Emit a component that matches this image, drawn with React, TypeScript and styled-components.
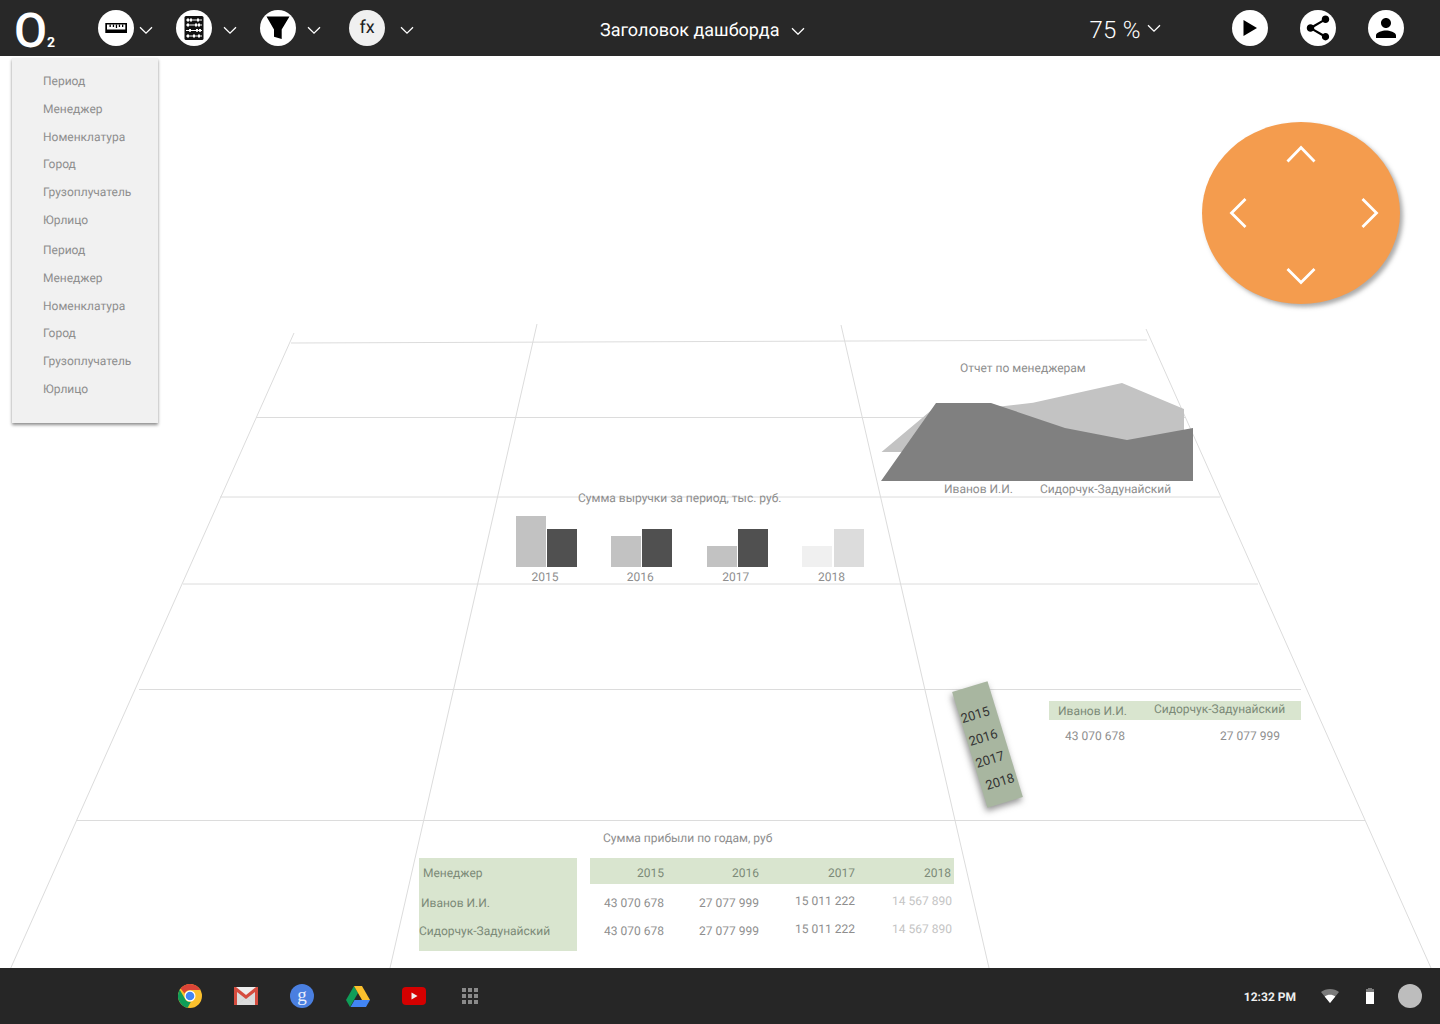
import { FC } from "react";
import styled, { createGlobalStyle } from "styled-components";

const filters = ["Период", "Менеджер", "Номенклатура", "Город", "Грузоплучатель", "Юрлицо"];

const bars = [
  { year: "2015", left: 51, right: 38, leftColor: "#c2c2c2", rightColor: "#505050" },
  { year: "2016", left: 31, right: 38, leftColor: "#c2c2c2", rightColor: "#505050" },
  { year: "2017", left: 21, right: 38, leftColor: "#c2c2c2", rightColor: "#505050" },
  { year: "2018", left: 21, right: 38, leftColor: "#f0f0f0", rightColor: "#dcdcdc" },
];

const years = ["2015", "2016", "2017", "2018"];
const chipShift = [-2, -1, -1, 2];
const amounts = ["43 070 678", "27 077 999", "15 011 222", "14 567 890"];

const Chevron: FC = () => (
  <ChevronMark width="14" height="8.4" viewBox="0 0 14 8.4" fill="none">
    <path d="M1 1.2 7 7.2 13 1.2" stroke="#fff" strokeWidth="1.3" />
  </ChevronMark>
);

const RulerIcon = () => (
  <svg width="24" height="24" viewBox="0 0 24 24">
    <path fill="#000" d="M1.300 7h21.700v10H1.300z" />
    <path fill="#fff" d="M3 8.500h18.300v5H3z" />
    <path fill="#000" d="M5.500 8.500h1.300v2.600H5.500zM8.800 8.500h1.300v2.600H8.800zM11.800 8.500h1.300v3.400h-1.300zM14.800 8.500h1.300v2.600h-1.300zM18 8.500h1.300v2.600H18z" />
  </svg>
);

const AbacusIcon = () => (
  <svg width="26" height="26" viewBox="0 0 26 26">
    <rect x="3.500" y="1" width="19" height="24" rx="1.500" fill="#111" />
    <path stroke="#fff" strokeWidth="1" d="M5 5h16M5 10h16M5 15.500h16M5 21h16" />
    <path fill="#fff" d="M6 3.600h2v2.800H6zM9 3.600h2v2.800H9zM16 3.600h2v2.800h-2zM6 8.600h2v2.800H6zM14 8.600h2v2.800h-2zM17 8.600h2v2.800h-2zM8 14h2v2.800H8zM15 14h2v2.800h-2zM18 14h2v2.800h-2zM6 19.600h2v2.800H6zM12 19.600h2v2.800h-2zM17 19.600h2v2.800h-2z" />
  </svg>
);

const FunnelIcon = () => (
  <svg width="30" height="30" viewBox="0 0 30 30">
    <path fill="#000" d="M3.500 3.500H26.500L18.700 16.500V26L11 23.700V16.500z" />
  </svg>
);

const PlayIcon = () => (
  <svg width="20" height="20" viewBox="0 0 20 20">
    <path fill="#000" d="M3.500 2 17 10 3.500 18z" />
  </svg>
);

const ShareIcon = () => (
  <svg width="30" height="30" viewBox="0 0 24 24">
    <path
      fill="#000"
      d="M18 16.080c-.76 0-1.440.3-1.960.77L8.910 12.700c.05-.23.09-.46.09-.7s-.04-.47-.09-.7l7.050-4.110c.54.5 1.250.81 2.040.81 1.660 0 3-1.340 3-3s-1.340-3-3-3-3 1.340-3 3c0 .24.04.47.09.7L8.040 9.810C7.500 9.310 6.790 9 6 9c-1.660 0-3 1.340-3 3s1.340 3 3 3c.79 0 1.500-.31 2.040-.81l7.120 4.160c-.05.21-.08.43-.08.65 0 1.610 1.310 2.920 2.920 2.920 1.610 0 2.920-1.310 2.920-2.920s-1.310-2.920-2.920-2.920z"
    />
  </svg>
);

const PersonIcon = () => (
  <svg width="30" height="30" viewBox="0 0 24 24">
    <path
      fill="#000"
      d="M12 12c2.210 0 4-1.790 4-4s-1.790-4-4-4-4 1.790-4 4 1.790 4 4 4zm0 2c-2.670 0-8 1.340-8 4v2h16v-2c0-2.660-5.330-4-8-4z"
    />
  </svg>
);

const ChromeLogo = () => (
  <svg width="24" height="24" viewBox="0 0 24 24">
    <circle cx="12" cy="12" r="12" fill="#fbc02d" />
    <path fill="#db4437" d="M12 0a12 12 0 0 1 10.400 6H12a6 6 0 0 0-5.500 3.600L2.600 4.500A12 12 0 0 1 12 0z" />
    <path fill="#0f9d58" d="M1.700 5.800 7 14.800A6 6 0 0 0 12.800 18l-3.200 5.800A12 12 0 0 1 1.700 5.800z" />
    <circle cx="12" cy="12" r="5.500" fill="#fff" />
    <circle cx="12" cy="12" r="4.300" fill="#4285f4" />
  </svg>
);

const GmailLogo = () => (
  <svg width="24" height="18" viewBox="0 0 24 18">
    <rect width="24" height="18" fill="#eeeeee" />
    <path fill="#dcdcdc" d="M3 18 12 10l9 8z" />
    <path fill="#c8c8c8" d="M3 4 12 11 3 18zM21 4l-9 7 9 7z" opacity=".5" />
    <path fill="#d54c3f" d="M0 0h2l10 8 10-8h2v18h-3V5l-9 7-9-7v13H0z" />
  </svg>
);

const PlusLogo = () => (
  <svg width="24" height="24" viewBox="0 0 24 24">
    <circle cx="12" cy="12" r="12" fill="#4a7fe0" />
    <text x="12" y="17" textAnchor="middle" fontFamily="'Liberation Serif', serif" fontSize="19" fill="#e8eefc">
      g
    </text>
  </svg>
);

const DriveLogo = () => (
  <svg width="24" height="21" viewBox="0 0 24 21">
    <path fill="#0f9d58" d="M8 0l4 7-8 14-4-7z" />
    <path fill="#fbc02d" d="M8 0h8l8 14h-8z" />
    <path fill="#4285f4" d="M4.500 21 8.500 14H24l-4 7z" />
  </svg>
);

const YoutubeLogo = () => (
  <svg width="24" height="18" viewBox="0 0 24 18">
    <rect width="24" height="18" rx="4" fill="#d50000" />
    <path fill="#eee" d="M9.500 5.500 15.500 9l-6 3.500z" />
  </svg>
);

const AppsIcon = () => (
  <svg width="16" height="16" viewBox="0 0 16 16" fill="#8a8a8a">
    <path d="M0 0h4v4H0zM6 0h4v4H6zM12 0h4v4h-4zM0 6h4v4H0zM6 6h4v4H6zM12 6h4v4h-4zM0 12h4v4H0zM6 12h4v4H6zM12 12h4v4h-4z" />
  </svg>
);

const WifiIcon = () => (
  <svg width="18" height="14" viewBox="0 0 18 14">
    <path fill="#7a7a7a" d="M9 0C5.500 0 2.500 1.100 0 3l9 11 9-11C15.500 1.100 12.500 0 9 0z" />
    <path fill="#fff" d="M3.700 7.500 9 14l5.300-6.500C12.800 6.400 11 5.800 9 5.800s-3.800.6-5.300 1.700z" />
  </svg>
);

const BatteryIcon = () => (
  <svg width="8" height="16" viewBox="0 0 8 16">
    <path fill="#7a7a7a" d="M2 0h4v1h2v4H0V1h2z" />
    <path fill="#fff" d="M0 4h8v12H0z" />
  </svg>
);

const App: FC = () => (
  <Page>
    <GlobalStyle />
    <TopBar>
      <Logo>
        O<sub>2</sub>
      </Logo>
      <ToolGroup $width={78}>
        <IconCircle>
          <RulerIcon />
        </IconCircle>
        <Chevron />
      </ToolGroup>
      <ToolGroup $width={84} $gap={11}>
        <IconCircle>
          <AbacusIcon />
        </IconCircle>
        <Chevron />
      </ToolGroup>
      <ToolGroup $width={89} $gap={11}>
        <IconCircle>
          <FunnelIcon />
        </IconCircle>
        <Chevron />
      </ToolGroup>
      <ToolGroup $width={251} $gap={15}>
        <FxCircle>fx</FxCircle>
        <Chevron />
      </ToolGroup>
      <DashTitle>Заголовок дашборда</DashTitle>
      <Chevron />
      <Zoom>75 %</Zoom>
      <ZoomChevron>
        <Chevron />
      </ZoomChevron>
      <RightIcons>
        <IconCircle>
          <PlayIcon />
        </IconCircle>
        <IconCircle>
          <ShareIcon />
        </IconCircle>
        <IconCircle>
          <PersonIcon />
        </IconCircle>
      </RightIcons>
    </TopBar>

    <Canvas>
      <GridLines viewBox="0 56 1440 912">
        <g stroke="#dcdcdc" strokeWidth="1" fill="none">
          <path d="M291 343 1147 340" />
          <path d="M256 417.500H1185" />
          <path d="M220 497H1220" />
          <path d="M183 584H1258" />
          <path d="M139 689.500H1301" />
          <path d="M77 820.500H1365" />
          <path d="M294 333 9 972" />
          <path d="M537 324 390 968" />
          <path d="M841 325 989 968" />
          <path d="M1146 329 1431 968" />
        </g>
      </GridLines>

      <Menu>
        <MenuGroup>
          {filters.map((item) => (
            <MenuItem key={item}>{item}</MenuItem>
          ))}
        </MenuGroup>
        <MenuGroup>
          {filters.map((item) => (
            <MenuItem key={item}>{item}</MenuItem>
          ))}
        </MenuGroup>
      </Menu>

      <Dpad>
        <svg width="198" height="182" viewBox="0 0 198 182" fill="none">
          <g stroke="#fff" strokeWidth="2.800">
            <path d="M85.500 39.500 99 25.500 112.500 39.500" />
            <path d="M85.500 147 99 160.500 112.500 147" />
            <path d="M43.500 77 29.500 91 43.500 105" />
            <path d="M160.500 77 174.500 91 160.500 105" />
          </g>
        </svg>
      </Dpad>

      <AreaWidget>
        <AreaTitle>Отчет по менеджерам</AreaTitle>
        <svg width="313" height="100" viewBox="881 382 313 100">
          <path fill="#c3c3c3" d="M881.500 452 940 403 998 406.700 1033 402.700 1122 383 1184 409V452z" />
          <path fill="#808080" d="M881 481 936 403H991L1065 428 1127 440 1193 428V481z" />
        </svg>
        <AreaLegend>
          <span>Иванов И.И.</span>
          <span>Сидорчук-Задунайский</span>
        </AreaLegend>
      </AreaWidget>

      <BarWidget>
        <BarTitle>Сумма выручки за период, тыс. руб.</BarTitle>
        <BarRow>
          {bars.map((group) => (
            <BarGroup key={group.year}>
              <BarPair>
                <Bar $color={group.leftColor} style={{ height: group.left }} />
                <Bar $color={group.rightColor} style={{ height: group.right }} />
              </BarPair>
              <BarLabel>{group.year}</BarLabel>
            </BarGroup>
          ))}
        </BarRow>
      </BarWidget>

      <YearChip>
        {years.map((year, i) => (
          <ChipYear key={year} $shift={chipShift[i]}>
            {year}
          </ChipYear>
        ))}
      </YearChip>

      <MiniTable>
        <MiniHead>
          <MiniHeadCell $width={105} $pad={9} $lift={0}>
            Иванов И.И.
          </MiniHeadCell>
          <MiniHeadCell $width={147} $pad={0} $lift={2}>
            Сидорчук-Задунайский
          </MiniHeadCell>
        </MiniHead>
        <MiniRow>
          <MiniValue $width={155}>43 070 678</MiniValue>
          <MiniValue $width={60}>27 077 999</MiniValue>
        </MiniRow>
      </MiniTable>

      <ProfitWidget>
        <ProfitTitle>Сумма прибыли по годам, руб</ProfitTitle>
        <ProfitBody>
          <NameColumn>
            <NameCell $pad={4} $height={30}>
              Менеджер
            </NameCell>
            <NameCell $pad={2} $height={30}>
              Иванов И.И.
            </NameCell>
            <NameCell $pad={0} $height={26}>
              Сидорчук-Задунайский
            </NameCell>
          </NameColumn>
          <DataColumn>
            <DataHead>
              {years.map((year) => (
                <div key={year}>{year}</div>
              ))}
            </DataHead>
            {[0, 1].map((row) => (
              <DataRow key={row}>
                {amounts.map((amount, i) => (
                  <DataValue key={amount} $lift={i >= 2} $faded={i === 3}>
                    {amount}
                  </DataValue>
                ))}
              </DataRow>
            ))}
          </DataColumn>
        </ProfitBody>
      </ProfitWidget>
    </Canvas>

    <TaskBar>
      <Launcher>
        <LauncherSlot>
          <ChromeLogo />
        </LauncherSlot>
        <LauncherSlot>
          <GmailLogo />
        </LauncherSlot>
        <LauncherSlot>
          <PlusLogo />
        </LauncherSlot>
        <LauncherSlot>
          <DriveLogo />
        </LauncherSlot>
        <LauncherSlot>
          <YoutubeLogo />
        </LauncherSlot>
        <LauncherSlot>
          <AppsIcon />
        </LauncherSlot>
      </Launcher>
      <Tray>
        <Clock>12:32 PM</Clock>
        <WifiIcon />
        <BatteryIcon />
        <Avatar />
      </Tray>
    </TaskBar>
  </Page>
);

export default App;

const GlobalStyle = createGlobalStyle`
  html, body {
    margin: 0;
    padding: 0;
    background: #fff;
    font-family: Roboto, "Liberation Sans", sans-serif;
    text-rendering: geometricPrecision;
  }
`;

const Page = styled.div`
  width: 1440px;
  height: 1024px;
  display: flex;
  flex-direction: column;
  overflow: hidden;
`;

const TopBar = styled.header`
  height: 56px;
  background: #282828;
  display: flex;
  align-items: center;
  color: #fff;
  flex-shrink: 0;
`;

const Logo = styled.div`
  width: 98px;
  padding: 3px 0 0 14px;
  box-sizing: border-box;
  font-size: 48px;
  font-weight: 500;
  line-height: 56px;
  height: 56px;

  sub {
    font-size: 14px;
    font-weight: 700;
    line-height: 0;
    vertical-align: baseline;
  }
`;

const ToolGroup = styled.div<{ $width: number; $gap?: number }>`
  width: ${(props) => props.$width}px;
  display: flex;
  align-items: center;
  gap: ${(props) => props.$gap ?? 5}px;
  flex-shrink: 0;
  margin-top: -1px;
`;

const ChevronMark = styled.svg`
  margin-top: 6px;
  flex-shrink: 0;
`;

const IconCircle = styled.div`
  width: 36px;
  height: 36px;
  border-radius: 50%;
  background: #fff;
  display: flex;
  align-items: center;
  justify-content: center;
  flex-shrink: 0;
  overflow: hidden;
`;

const FxCircle = styled(IconCircle)`
  background: #f0f0f0;
  color: #222;
  font-size: 18px;
`;

const DashTitle = styled.div`
  font-size: 18px;
  margin: 5px 12px 0 0;
`;

const Zoom = styled.div`
  font-size: 24px;
  font-weight: 300;
  letter-spacing: 0.3px;
  margin: 3px 6px 0 284px;
`;

const ZoomChevron = styled.div`
  display: flex;
  margin-top: -5px;
`;

const RightIcons = styled.div`
  display: flex;
  gap: 32px;
  margin-left: 71px;
  margin-top: -1px;
`;

const Canvas = styled.main`
  position: relative;
  flex: 1;
`;

const GridLines = styled.svg`
  position: absolute;
  inset: 0;
  width: 100%;
  height: 100%;
`;

const Menu = styled.div`
  position: absolute;
  left: 12px;
  top: 2px;
  width: 146px;
  height: 365px;
  box-sizing: border-box;
  padding: 10px 0 0 31px;
  background: #f1f1f1;
  box-shadow: 0 2px 3px rgba(0, 0, 0, 0.45);
  display: flex;
  flex-direction: column;
  gap: 2.5px;
`;

const MenuGroup = styled.div`
  display: flex;
  flex-direction: column;
`;

const MenuItem = styled.div`
  font-size: 12px;
  line-height: 27.75px;
  color: #8e8e8e;
`;

const Dpad = styled.div`
  position: absolute;
  left: 1202px;
  top: 66px;
  width: 198px;
  height: 182px;
  border-radius: 50%;
  background: #f49c4e;
  box-shadow: 3px 3px 4px rgba(90, 90, 90, 0.5);
`;

const AreaWidget = styled.section`
  position: absolute;
  left: 881px;
  top: 304px;
  width: 313px;
  display: flex;
  flex-direction: column;

  svg {
    display: block;
  }
`;

const AreaTitle = styled.div`
  font-size: 12px;
  line-height: 16px;
  color: #8e8e8e;
  padding-left: 79px;
  height: 22px;
`;

const AreaLegend = styled.div`
  display: flex;
  gap: 27px;
  padding-left: 63px;
  margin-top: -1px;
  font-size: 12px;
  line-height: 16px;
  color: #8e8e8e;
`;

const BarWidget = styled.section`
  position: absolute;
  left: 516px;
  top: 434px;
  width: 348px;
  display: flex;
  flex-direction: column;
`;

const BarTitle = styled.div`
  font-size: 12px;
  line-height: 16px;
  color: #8e8e8e;
  padding-left: 62px;
  white-space: nowrap;
  height: 16px;
`;

const BarRow = styled.div`
  display: flex;
  justify-content: space-between;
  margin-top: 10px;
`;

const BarGroup = styled.div`
  width: 61px;
  display: flex;
  flex-direction: column;
  align-items: center;

  &:last-child {
    width: 62px;
  }
`;

const BarPair = styled.div`
  width: 100%;
  height: 51px;
  display: flex;
  align-items: flex-end;
  justify-content: space-between;
`;

const Bar = styled.div<{ $color: string }>`
  width: 30px;
  background: ${(props) => props.$color};
`;

const BarLabel = styled.div`
  font-size: 12px;
  line-height: 20px;
  color: #8e8e8e;
  padding-right: 3px;
`;

const YearChip = styled.div`
  position: absolute;
  left: 968.500px;
  top: 628px;
  width: 37px;
  height: 121px;
  background: #a8b6a0;
  transform: rotate(-17deg);
  box-shadow: -2px 3px 6px rgba(60, 60, 60, 0.55);
  display: flex;
  flex-direction: column;
  align-items: center;
  padding: 18px 2px 0 0;
  box-sizing: border-box;
  font-size: 13px;
  line-height: 23.500px;
  color: #333;
`;

const ChipYear = styled.span<{ $shift: number }>`
  margin-left: ${(props) => props.$shift * 2}px;
`;

const MiniTable = styled.section`
  position: absolute;
  left: 1049px;
  top: 645px;
  width: 252px;
`;

const MiniHead = styled.div`
  display: flex;
  height: 19px;
  background: #d9e5cf;
`;

const MiniHeadCell = styled.div<{ $width: number; $pad: number; $lift: number }>`
  width: ${(props) => props.$width}px;
  padding-left: ${(props) => props.$pad}px;
  box-sizing: border-box;
  font-size: 12px;
  line-height: 20px;
  margin-top: ${(props) => -props.$lift}px;
  color: #7c8a78;
  white-space: nowrap;
`;

const MiniRow = styled.div`
  display: flex;
  padding: 8px 0 0 16px;
`;

const MiniValue = styled.div<{ $width: number }>`
  width: ${(props) => props.$width}px;
  font-size: 12px;
  line-height: 16px;
  color: #8e8e8e;
  white-space: nowrap;
  flex-shrink: 0;
`;

const ProfitWidget = styled.section`
  position: absolute;
  left: 419px;
  top: 774px;
  width: 535px;
  display: flex;
  flex-direction: column;
`;

const ProfitTitle = styled.div`
  font-size: 12px;
  line-height: 16px;
  color: #8e8e8e;
  padding-left: 184px;
  margin-bottom: 12px;
`;

const ProfitBody = styled.div`
  display: flex;
  gap: 13px;
`;

const NameColumn = styled.div`
  width: 158px;
  height: 93px;
  background: #d9e5cf;
`;

const NameCell = styled.div<{ $pad: number; $height: number }>`
  padding-left: ${(props) => props.$pad}px;
  height: ${(props) => props.$height}px;
  line-height: ${(props) => props.$height}px;
  font-size: 12px;
  color: #7c8a78;
  white-space: nowrap;
`;

const DataColumn = styled.div`
  flex: 1;
`;

const rowGrid = `
  display: grid;
  grid-template-columns: 74px 95px 96px 97px;
  justify-content: start;
  font-size: 12px;
  text-align: right;
`;

const DataHead = styled.div`
  ${rowGrid}
  height: 26px;
  background: #d9e5cf;
  line-height: 30px;
  color: #7c8a78;

  div:last-child {
    padding-right: 1px;
  }
`;

const DataRow = styled.div`
  ${rowGrid}
  height: 28px;
  box-sizing: border-box;
  padding-top: 11px;
  line-height: 16px;
`;

const DataValue = styled.div<{ $lift: boolean; $faded: boolean }>`
  color: ${(props) => (props.$faded ? "#c4c4c4" : "#8e8e8e")};
  margin-top: ${(props) => (props.$lift ? -2 : 0)}px;
`;

const TaskBar = styled.footer`
  height: 56px;
  background: #262626;
  flex-shrink: 0;
  display: flex;
  align-items: center;
  justify-content: space-between;
  padding: 0 18px 0 162px;
`;

const Launcher = styled.div`
  display: flex;
`;

const LauncherSlot = styled.div`
  width: 56px;
  height: 56px;
  display: flex;
  align-items: center;
  justify-content: center;
`;

const Tray = styled.div`
  display: flex;
  align-items: center;
  gap: 27px;
`;

const Clock = styled.div`
  font-size: 12px;
  font-weight: 700;
  color: #eee;
  margin: 2px -2px 0 0;
`;

const Avatar = styled.div`
  width: 24px;
  height: 24px;
  border-radius: 50%;
  background: #bdbdbd;
  margin-left: -3px;
`;
